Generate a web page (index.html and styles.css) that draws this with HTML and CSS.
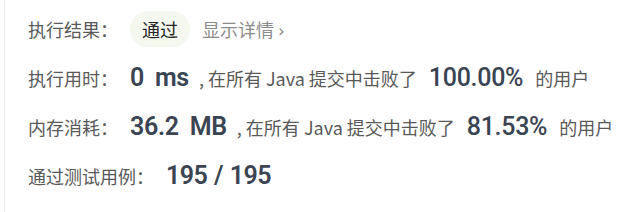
FILE: index.html
```html
<!DOCTYPE html>
<html lang="zh-CN">
<head>
    <meta charset="UTF-8">
    <meta name="viewport" content="width=device-width, initial-scale=1.0">
    <title>提交结果</title>
    <link rel="stylesheet" href="styles.css">
</head>
<body>
    <div class="result-panel">
        <div class="result-row">
            <span class="label">执行结果：</span>
            <span class="status-pass">通过</span>
            <a class="detail-link" href="#">显示详情 <span class="chevron">›</span></a>
        </div>
        <div class="result-row">
            <span class="label">执行用时：</span>
            <span class="big-num">0 ms</span>
            <span class="note">, 在所有 Java 提交中击败了</span>
            <span class="big-num pct">100.00%</span>
            <span class="note">的用户</span>
        </div>
        <div class="result-row">
            <span class="label">内存消耗：</span>
            <span class="big-num">36.2 MB</span>
            <span class="note">, 在所有 Java 提交中击败了</span>
            <span class="big-num pct">81.53%</span>
            <span class="note">的用户</span>
        </div>
        <div class="result-row">
            <span class="label">通过测试用例：</span>
            <span class="big-num cases">195 / 195</span>
        </div>
        <div class="result-row">
            <span class="label">比较：</span>
            <span class="note">无</span>
        </div>
    </div>
</body>
</html>
```

FILE: styles.css
```css
* {
    box-sizing: border-box;
    margin: 0;
    padding: 0;
}
body {
    font-family: "Noto Sans CJK SC", "Noto Sans", sans-serif;
    background-color: #ffffff;
    color: #595959;
    overflow: hidden;
}

.result-panel {
    margin-left: 4px;
    border-left: 1px solid #ececec;
    padding: 4px 0 0 23px;
    min-height: 212px;
}

.result-row {
    display: flex;
    align-items: center;
    height: 49px;
    font-size: 18px;
    white-space: nowrap;
}
.label {
    margin-right: 12px;
    color: #595959;
}

/* status badge */
.status-pass {
    display: inline-flex;
    align-items: center;
    height: 36px;
    padding: 0 12px;
    border-radius: 18px;
    background-color: #f5f8ee;
    color: #262626;
}
.detail-link {
    margin-left: 12px;
    color: #8c8c8c;
    text-decoration: none;
}
.detail-link .chevron {
    font-family: "DejaVu Sans", sans-serif;
    font-size: 17px;
}

.big-num {
    font-family: Roboto, "Noto Sans", sans-serif;
    font-size: 25px;
    font-weight: 600;
    letter-spacing: -0.3px;
    word-spacing: 5px;
    color: #3a4452;
}
.big-num.pct {
    font-weight: 500;
    margin: 0 12px;
}
.big-num.cases {
    letter-spacing: -0.5px;
    word-spacing: 1px;
}
.note {
    margin-left: 10px;
    color: #595959;
}
.pct + .note {
    margin-left: 0;
}
```
